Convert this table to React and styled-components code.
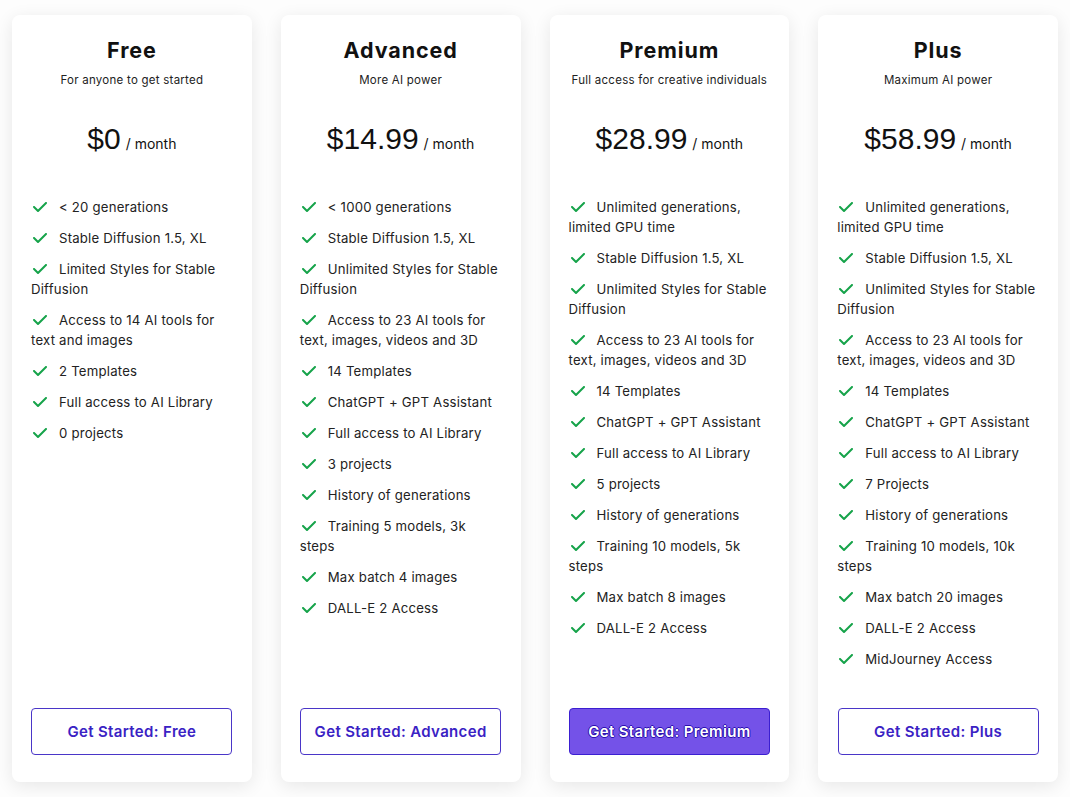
import React from 'react';
import styled, { createGlobalStyle } from 'styled-components';

const GlobalStyle = createGlobalStyle`
  html, body {
    margin: 0;
    padding: 0;
    background: #fdfdfd;
  }
  body {
    font-family: 'Inter', 'Noto Sans', sans-serif;
    color: #1a1a1a;
  }
`;

const Grid = styled.div`
  display: grid;
  grid-template-columns: repeat(4, 1fr);
  gap: 29px;
  padding: 15px 12px 15px 12px;
  height: 797px;
  box-sizing: border-box;
`;

const Card = styled.div`
  background: #fff;
  border-radius: 8px;
  box-shadow: 0 4px 18px rgba(0, 0, 0, 0.09);
  padding: 22px 19px 27px 19px;
  display: flex;
  flex-direction: column;
`;

const Nome = styled.h2`
  margin: 0;
  text-align: center;
  font-size: 21.5px;
  font-weight: 700;
  color: #111;
  letter-spacing: 0.9px;
  line-height: 26px;
`;

const Sub = styled.p`
  margin: 10px 0 0;
  text-align: center;
  font-size: 11.5px;
  letter-spacing: 0.25px;
  color: #222;
  line-height: 14px;
`;

const Preco = styled.div`
  margin-top: 34px;
  text-align: center;
  font-family: 'Liberation Sans', Arial, sans-serif;
  color: #111;
  line-height: 36px;
`;

const Valor = styled.span`
  font-size: 30px;
`;

const Mes = styled.span`
  font-family: 'Inter', 'Noto Sans', sans-serif;
  font-size: 14px;
  margin-left: 5px;
`;

const Lista = styled.ul`
  list-style: none;
  margin: 35px 0 0;
  padding: 0;
  display: flex;
  flex-direction: column;
  gap: 11px;
  flex: 1;
`;

const Item = styled.li`
  font-size: 13.2px;
  letter-spacing: 0.2px;
  line-height: 20px;
  color: #222;
`;

const Check = styled.svg`
  width: 14px;
  height: 12px;
  margin: 0 12px 0 2px;
  vertical-align: -1px;
  fill: #16a34a;
`;

const Botao = styled.button`
  height: 47px;
  width: 201px;
  align-self: center;
  border-radius: 4px;
  font-family: 'Inter', 'Noto Sans', sans-serif;
  font-size: 15px;
  font-weight: 600;
  letter-spacing: 0.35px;
  cursor: pointer;
  border: 1px solid ${p => (p.$cheio ? '#3b1fd1' : '#4a36c8')};
  background: ${p => (p.$cheio ? '#7452e8' : '#fff')};
  color: ${p => (p.$cheio ? '#fff' : '#3a22c4')};
  text-shadow: ${p =>
    p.$cheio
      ? '1px 0 0 #2a0fb0, -1px 0 0 #2a0fb0, 0 1px 0 #2a0fb0, 0 -1px 0 #2a0fb0'
      : 'none'};
`;

const planos = [
  {
    nome: 'Free',
    sub: 'For anyone to get started',
    preco: '$0',
    itens: [
      '< 20 generations',
      'Stable Diffusion 1.5, XL',
      'Limited Styles for Stable Diffusion',
      'Access to 14 AI tools for text and images',
      '2 Templates',
      'Full access to AI Library',
      '0 projects'
    ]
  },
  {
    nome: 'Advanced',
    sub: 'More AI power',
    preco: '$14.99',
    itens: [
      '< 1000 generations',
      'Stable Diffusion 1.5, XL',
      'Unlimited Styles for Stable Diffusion',
      'Access to 23 AI tools for text, images, videos and 3D',
      '14 Templates',
      'ChatGPT + GPT Assistant',
      'Full access to AI Library',
      '3 projects',
      'History of generations',
      'Training 5 models, 3k steps',
      'Max batch 4 images',
      'DALL-E 2 Access'
    ]
  },
  {
    nome: 'Premium',
    sub: 'Full access for creative individuals',
    preco: '$28.99',
    cheio: true,
    itens: [
      'Unlimited generations, limited GPU time',
      'Stable Diffusion 1.5, XL',
      'Unlimited Styles for Stable Diffusion',
      'Access to 23 AI tools for text, images, videos and 3D',
      '14 Templates',
      'ChatGPT + GPT Assistant',
      'Full access to AI Library',
      '5 projects',
      'History of generations',
      'Training 10 models, 5k steps',
      'Max batch 8 images',
      'DALL-E 2 Access'
    ]
  },
  {
    nome: 'Plus',
    sub: 'Maximum AI power',
    preco: '$58.99',
    itens: [
      'Unlimited generations, limited GPU time',
      'Stable Diffusion 1.5, XL',
      'Unlimited Styles for Stable Diffusion',
      'Access to 23 AI tools for text, images, videos and 3D',
      '14 Templates',
      'ChatGPT + GPT Assistant',
      'Full access to AI Library',
      '7 Projects',
      'History of generations',
      'Training 10 models, 10k steps',
      'Max batch 20 images',
      'DALL-E 2 Access',
      'MidJourney Access'
    ]
  }
];

const IconeCheck = () => (
  <Check viewBox="0 0 448 384">
    <path d="M438.6 41.4c12.5 12.5 12.5 32.8 0 45.3l-256 256c-12.5 12.5-32.8 12.5-45.3 0l-128-128c-12.5-12.5-12.5-32.8 0-45.3s32.8-12.5 45.3 0L160 274.7 393.4 41.4c12.5-12.5 32.8-12.5 45.3 0z" />
  </Check>
);

export default function App() {
  return (
    <>
      <GlobalStyle />
      <Grid>
        {planos.map(plano => (
          <Card key={plano.nome}>
            <Nome>{plano.nome}</Nome>
            <Sub>{plano.sub}</Sub>
            <Preco>
              <Valor>{plano.preco}</Valor>
              <Mes>/ month</Mes>
            </Preco>
            <Lista>
              {plano.itens.map(item => (
                <Item key={item}>
                  <IconeCheck />
                  {item}
                </Item>
              ))}
            </Lista>
            <Botao $cheio={plano.cheio}>Get Started: {plano.nome}</Botao>
          </Card>
        ))}
      </Grid>
    </>
  );
}
